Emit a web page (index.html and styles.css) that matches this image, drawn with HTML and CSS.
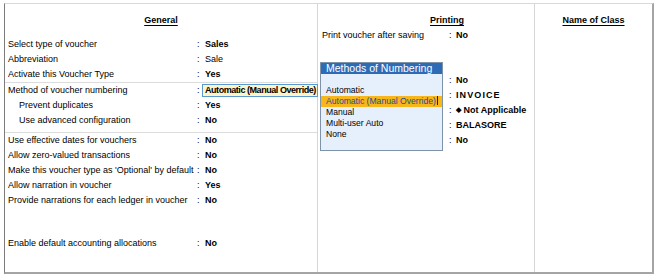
FILE: index.html
```html
<!DOCTYPE html>
<html>
<head>
<meta charset="utf-8">
<link rel="stylesheet" href="styles.css">
</head>
<body>
<div class="frame">
  <section class="col general">
    <div class="head"><span>General</span></div>
    <div class="group g1">
      <div class="row"><span class="lbl">Select type of voucher</span><span class="sep">:</span><span class="val b">Sales</span></div>
      <div class="row"><span class="lbl">Abbreviation</span><span class="sep">:</span><span class="val">Sale</span></div>
      <div class="row"><span class="lbl">Activate this Voucher Type</span><span class="sep">:</span><span class="val b">Yes</span></div>
    </div>
    <div class="group g2">
      <div class="row"><span class="lbl">Method of voucher numbering</span><span class="sep">:</span><span class="val b"><span class="field">Automatic (Manual Override)</span></span></div>
      <div class="row"><span class="lbl ind">Prevent duplicates</span><span class="sep">:</span><span class="val b">Yes</span></div>
      <div class="row"><span class="lbl ind">Use advanced configuration</span><span class="sep">:</span><span class="val b">No</span></div>
    </div>
    <div class="group g3">
      <div class="row"><span class="lbl">Use effective dates for vouchers</span><span class="sep">:</span><span class="val b">No</span></div>
      <div class="row"><span class="lbl">Allow zero-valued transactions</span><span class="sep">:</span><span class="val b">No</span></div>
      <div class="row"><span class="lbl">Make this voucher type as 'Optional' by default</span><span class="sep">:</span><span class="val b">No</span></div>
      <div class="row"><span class="lbl">Allow narration in voucher</span><span class="sep">:</span><span class="val b">Yes</span></div>
      <div class="row"><span class="lbl">Provide narrations for each ledger in voucher</span><span class="sep">:</span><span class="val b">No</span></div>
      <div class="spacer"></div>
      <div class="row"><span class="lbl">Enable default accounting allocations</span><span class="sep">:</span><span class="val b">No</span></div>
    </div>
  </section>
  <section class="col printing">
    <div class="head left"><span>Printing</span></div>
    <div class="row"><span class="lbl">Print voucher after saving</span><span class="sep">:</span><span class="val b">No</span></div>
    <div class="row"></div>
    <div class="row"></div>
    <div class="row"><span class="lbl"></span><span class="sep">:</span><span class="val b">No</span></div>
    <div class="row"><span class="lbl"></span><span class="sep">:</span><span class="val b spaced">INVOICE</span></div>
    <div class="row"><span class="lbl"></span><span class="sep">:</span><span class="val b"><span class="dia">&#9670;</span> Not Applicable</span></div>
    <div class="row"><span class="lbl"></span><span class="sep">:</span><span class="val b">BALASORE</span></div>
    <div class="row"><span class="lbl"></span><span class="sep">:</span><span class="val b">No</span></div>
  </section>
  <section class="col cls">
    <div class="head"><span>Name of Class</span></div>
  </section>

  <div class="popup">
    <div class="ptitle">Methods of Numbering</div>
    <div class="pitem"></div>
    <div class="pitem">Automatic</div>
    <div class="pitem sel">Automatic (Manual Override)<i class="caret"></i></div>
    <div class="pitem">Manual</div>
    <div class="pitem">Multi-user Auto</div>
    <div class="pitem">None</div>
  </div>
</div>
</body>
</html>
```
FILE: styles.css
```css
html, body {
  margin: 0;
  padding: 0;
  background: #ffffff;
}
body {
  font-family: "Liberation Sans", Arial, sans-serif;
  font-size: 9px;
  color: #000;
}
.frame {
  position: relative;
  margin: 3px 0 0 4px;
  width: 650px;
  height: 271px;
  box-sizing: border-box;
  border-left: 1px solid #7c7c7c;
  border-top: 1px solid #d9d9d9;
  border-right: 2px solid #a4a4a4;
  border-bottom: 2px solid #a4a4a4;
  display: grid;
  grid-template-columns: 313px 217px 1fr;
}
.col {
  padding-top: 9px;
  box-sizing: border-box;
  min-width: 0;
}
.general, .printing {
  border-right: 1px solid #d6d6d6;
}
.head {
  height: 15px;
  line-height: 15px;
  font-weight: bold;
  text-align: center;
}
.head span {
  text-decoration: underline;
  text-underline-offset: 2px;
}
.head.left {
  text-align: left;
  padding-left: 112px;
}
.row {
  display: grid;
  grid-template-columns: 189px 8px auto;
  height: 15px;
  line-height: 15px;
  padding-left: 3px;
  white-space: nowrap;
}
.printing .row {
  grid-template-columns: 127px 7px auto;
  padding-left: 4px;
}
.b { font-weight: bold; }
.ind { padding-left: 11px; }
.g1 {
  margin-top: 9px;
  border-bottom: 1px solid #dcdcdc;
}
.g2 {
  padding-bottom: 4px;
  border-bottom: 1px solid #dcdcdc;
}
.spacer { height: 28px; }
.field {
  display: inline-block;
  margin-left: -3px;
  margin-top: 1px;
  padding: 0 1px 0 2px;
  height: 11px;
  line-height: 11px;
  letter-spacing: -0.45px;
  background: #fff4c8;
  border: 1px solid #5a9ad2;
}
.spaced { letter-spacing: 1.1px; }
.dia { font-size: 7px; position: relative; top: -1px; }
.popup {
  position: absolute;
  left: 315px;
  top: 58px;
  width: 123px;
  height: 89px;
  box-sizing: border-box;
  border: 1px solid #7f93a8;
  background: #e5f0fc;
}
.ptitle {
  height: 11px;
  line-height: 11px;
  background: #2c6cb7;
  color: #ffffff;
  padding-left: 5px;
  font-size: 10.5px;
  white-space: nowrap;
}
.pitem {
  height: 11px;
  line-height: 11px;
  padding-left: 5px;
  white-space: nowrap;
  font-size: 8.6px;
}
.pitem.sel {
  background: #f7b619;
  color: #1d4c9e;
}
.caret {
  display: inline-block;
  width: 1px;
  height: 9px;
  background: #222;
  vertical-align: -1px;
  margin-left: 1px;
}
```
